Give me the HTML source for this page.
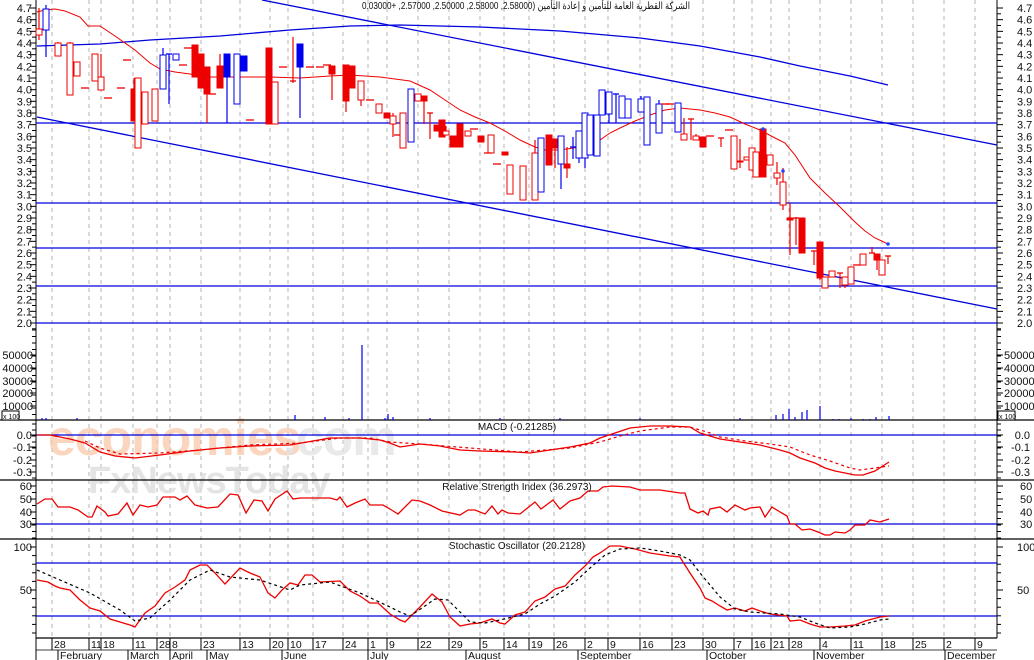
<!DOCTYPE html>
<html><head><meta charset="utf-8">
<style>
html,body{margin:0;padding:0;background:#fff;width:1034px;height:660px;overflow:hidden}
svg{display:block}
text{font-family:"Liberation Sans","Noto Sans CJK SC",sans-serif;font-size:10.5px;fill:#111}
</style></head>
<body>
<svg id="s" width="1034" height="660" viewBox="0 0 1034 660" xmlns="http://www.w3.org/2000/svg">
<rect width="1034" height="660" fill="#fff"/>
<g id="grid"></g>
<text x="48" y="455" style="font-size:50px;fill:#f8c5a5;opacity:.7;font-weight:bold;letter-spacing:-1px">economies</text>
<text x="283" y="455" style="font-size:50px;fill:#e2e2e2;opacity:.75;font-weight:bold;letter-spacing:-1px">.com</text>
<text x="88" y="493" style="font-size:38px;fill:#dcdcdc;opacity:.75;font-weight:bold;letter-spacing:-1px">FxNewsToday</text>
<g id="main"></g>
<text x="362" y="9" textLength="328" lengthAdjust="spacingAndGlyphs" style="font-size:10px">0.03000+ ,2.57000 ,2.50000 ,2.58000 ,2.58000) الشركة القطرية العامة للتأمين و إعادة التأمين</text>
<text x="517" y="430" text-anchor="middle" style="font-size:10px">MACD (-0.21285)</text>
<text x="517" y="490" text-anchor="middle" style="font-size:10px">Relative Strength Index (36.2973)</text>
<text x="517" y="549" text-anchor="middle" style="font-size:10px">Stochastic Oscillator (20.2128)</text>
<rect x="2" y="411" width="17" height="9" fill="#fff" stroke="#000" stroke-width="1"/>
<text x="3" y="419" style="font-size:7px">x 100</text>
<rect x="998" y="411" width="17" height="9" fill="#fff" stroke="#000" stroke-width="1"/>
<text x="999" y="419" style="font-size:7px">x 100</text>
</svg>
<script>
const NS="http://www.w3.org/2000/svg";
const S=document.getElementById('s'),G=document.getElementById('grid'),M=document.getElementById('main');
function el(p,t,a,txt){const e=document.createElementNS(NS,t);for(const k in a)e.setAttribute(k,a[k]);if(txt!==undefined)e.textContent=txt;p.appendChild(e);return e;}
function line(p,x1,y1,x2,y2,c,w,d){const a={x1,y1,x2,y2,stroke:c,'stroke-width':w||1};if(d)a['stroke-dasharray']=d;return el(p,'line',a);}
function poly(p,pts,c,w,d){const a={points:pts.map(q=>q.join(',')).join(' '),fill:'none',stroke:c,'stroke-width':w||1};if(d)a['stroke-dasharray']=d;return el(p,'polyline',a);}
function txt(p,x,y,s,anc,sz){const a={x,y};if(anc)a['text-anchor']=anc;if(sz)a.style='font-size:'+sz+'px';return el(p,'text',a,s);}
const gx=[52,89,101,133,157,170,201,240,270,288,313,343,368,387,418,449,480,504,529,554,585,608,640,672,703,734,752,771,789,820,851,882,913,944,975];
gx.forEach(x=>line(G,x,0,x,638,'#b5b5b5',1,'4,4'));
line(M,36,0,36,638,'#000',1);line(M,997,0,997,638,'#000',1);
line(M,0,420,1034,420,'#000',1.3);line(M,0,480,1034,480,'#000',1.3);line(M,0,539,1034,539,'#000',1.3);line(M,36,638,997,638,'#000',1.3);
line(M,36,638,36,660,'#000',1);
const py=p=>8+(4.7-p)*116.67;
for(let i=0;i<=27;i++){const p=4.7-i*0.1,y=py(p),s=p.toFixed(1);
 txt(M,32,y+4,s,'end',11);txt(M,1017,y+4,s,null,11);
 line(M,30,y,36,y,'#000',1);line(M,997,y,1003,y,'#000',1);
 line(M,32,y+5.8,36,y+5.8,'#000',1);line(M,997,y+5.8,1001,y+5.8,'#000',1);}
for(let y=330;y<420;y+=6.5){line(M,32,y,36,y,'#000',1);line(M,997,y,1001,y,'#000',1);}
[[50000,355],[40000,368],[30000,381],[20000,393],[10000,406]].forEach(([v,y])=>{txt(M,33,y+4,v,'end',11);txt(M,1004,y+4,v,null,11);line(M,30,y,36,y,'#000',1);line(M,997,y,1003,y,'#000',1);});
[['0.0',435],['-0.1',447],['-0.2',460],['-0.3',472]].forEach(([v,y])=>{txt(M,32,y+4,v,'end',11);txt(M,1030,y+4,v,'end',11);line(M,30,y,36,y,'#000',1);line(M,997,y,1003,y,'#000',1);});
for(let y=424;y<480;y+=6){line(M,32,y,36,y,'#000',1);line(M,997,y,1001,y,'#000',1);}
[['60',486],['50',499],['40',512],['30',524]].forEach(([v,y])=>{txt(M,32,y+4,v,'end',11);txt(M,1020,y+4,v,null,11);line(M,30,y,36,y,'#000',1);line(M,997,y,1003,y,'#000',1);});
for(let y=486;y<539;y+=6.5){line(M,32,y,36,y,'#000',1);line(M,997,y,1001,y,'#000',1);}
[['100',547],['50',590]].forEach(([v,y])=>{txt(M,32,y+4,v,'end',11);txt(M,1017,y+4,v,null,11);line(M,30,y,36,y,'#000',1);line(M,997,y,1003,y,'#000',1);});
for(let y=547;y<638;y+=8.6){line(M,32,y,36,y,'#000',1);line(M,997,y,1001,y,'#000',1);}
[123,203,248,286].forEach(y=>line(M,36,y,997,y,'#0000dd',1.3));
line(M,36,323,997,323,'#0000dd',1.3);
line(M,36,435,997,435,'#0000dd',1.3);line(M,36,524,997,524,'#0000dd',1.3);
line(M,36,563,997,563,'#0000dd',1.3);line(M,36,616,997,616,'#0000dd',1.3);
line(M,262,0,997,145,'#0000dd',1.3);
line(M,37,117,997,309,'#0000dd',1.3);
poly(M,[[37,46],[100,44],[150,40],[220,36],[290,30],[350,26],[400,25],[480,27],[560,31],[640,38],[700,46],[760,57],[800,66],[850,76],[888,85]],'#0000dd',1.3);
poly(M,[[37,12],[45,10],[55,9],[65,11],[80,17],[88,26],[100,26],[115,36],[135,50],[150,63],[160,69],[175,72],[190,74],[210,77],[240,77],[270,77],[300,78],[330,76],[350,75],[380,77],[410,81],[430,90],[445,100],[460,110],[475,117],[490,123],[505,131],[520,140],[535,147],[545,150],[560,150],[580,147],[600,140],[610,133],[620,128],[635,121],[650,115],[665,110],[680,108],[700,110],[715,113],[730,117],[745,124],[760,130],[775,138],[785,143],[795,155],[810,178],[825,193],[840,207],[855,222],[865,231],[875,238],[888,244]],'#ee0000',1);
const C=[[39,29,35,8,40,'r',0],[46,9,30,5,57,'b',0],[58,43,56,42,56,'r',0],[70,43,95,42,95,'r',0],[77,62,76,62,76,'r',0],[85,88,88],[95,54,81,54,81,'r',0],[101,77,90,54,90,'r',0],[108,98,98],[121,88,88],[127,60,60],[134,89,121,78,121,'r',1],[138,78,148,78,148,'r',0],[145,92,124,92,124,'r',0],[155,89,121,89,121,'r',0],[163,55,89,48,89,'b',0],[169,54,54,54,104,'b',0],[176,54,60,54,60,'b',0],[183,65,65],[188,48,48],[195,45,77,45,77,'r',1],[201,54,88,54,88,'r',1],[207,67,94,67,123,'r',1],[212,94,94],[220,66,88,54,88,'r',1],[227,54,77,54,123,'b',1],[237,54,104,54,104,'b',0],[244,56,71,56,71,'b',1],[250,120,120],[269,48,124,48,124,'r',1],[275,82,124,82,124,'r',0],[283,67,67],[293,81,81,37,83,'r',0],[300,44,67,44,118,'b',1],[310,67,67],[320,67,67],[327,65,65],[332,66,74,66,100,'r',1],[346,65,101,65,112,'r',1],[352,66,88,66,88,'r',1],[361,81,100,81,106,'r',0],[370,100,100],[379,104,113,104,113,'r',0],[387,113,118,113,118,'r',1],[393,116,124,113,137,'r',0],[398,135,135],[403,113,148,113,148,'r',0],[411,89,142,89,142,'b',0],[418,94,101,94,101,'r',0],[424,96,101,96,124,'r',1],[430,113,113,113,139,'r',0],[437,125,131,125,131,'r',1],[442,120,137,120,137,'r',1],[446,131,135,126,135,'r',0],[453,136,147,136,147,'r',1],[460,124,147,124,147,'r',1],[468,131,136,131,136,'r',0],[474,129,129],[481,136,142,136,142,'r',1],[491,135,153,135,153,'r',0],[488,153,153],[497,164,164],[505,152,155,152,155,'r',1],[510,165,194,165,194,'r',0],[523,166,200,166,200,'r',0],[535,153,200,140,200,'r',0],[541,138,192,138,192,'b',0],[549,135,165,135,165,'r',1],[555,139,148,139,168,'r',1],[561,136,164,136,189,'b',0],[567,164,168,147,178,'r',1],[573,147,147,137,159,'b',0],[579,131,158,131,163,'b',0],[585,113,158,113,168,'b',0],[590,115,155,115,155,'b',0],[597,115,156,115,156,'b',0],[602,90,115,90,115,'b',0],[609,92,114,92,123,'b',0],[616,94,94,94,123,'b',0],[622,96,118,96,118,'b',0],[628,99,118,99,118,'b',0],[641,99,112,96,112,'b',0],[647,97,145,97,145,'b',0],[659,104,133,100,133,'b',0],[665,104,104],[670,104,104],[678,103,132,103,132,'b',0],[684,134,140,118,140,'r',0],[691,119,119,119,140,'r',0],[696,136,140,134,140,'r',0],[703,137,147,137,147,'r',1],[710,136,136],[721,138,138,138,147,'r',0],[729,130,130],[734,136,169,136,169,'r',0],[740,161,162,139,168,'r',0],[747,157,160,157,160,'r',0],[752,148,170,148,170,'r',0],[756,152,177,152,177,'r',0],[763,129,177,129,177,'r',1],[770,155,165,155,165,'r',0],[777,173,178,162,185,'r',0],[783,182,205,168,210,'r',0],[790,218,220,203,255,'r',1],[796,218,218,217,245,'r',0],[802,218,253,218,253,'r',1],[814,251,251,251,265,'r',0],[820,242,278,242,280,'r',1],[825,277,288,277,288,'r',0],[832,271,277,271,277,'r',0],[840,273,273,273,288,'r',0],[845,277,285,277,288,'r',0],[851,267,284,267,284,'r',0],[857,265,265],[863,254,265,254,265,'r',0],[872,253,253,247,253,'r',0],[877,254,260,254,270,'r',1],[882,260,275,260,275,'r',0],[888,256,256,256,264,'r',0]];
C.forEach(c=>{let [x,t,b,wt,wb,col,f]=c;const k=col==='b'?'#0000ee':'#ee0000';
 if(wt===undefined){line(M,x-4,t,x+4,t,'#ee0000',1.3);return;}
 line(M,x,wt,x,wb,k,1.2);
 if(b-t<1){line(M,x-3,t,x+3,t,k,1.3);}
 else el(M,'rect',{x:x-3,y:t,width:6,height:b-t,fill:f?k:'#fff',stroke:k,'stroke-width':1});});
[[763,129],[783,171],[888,244]].forEach(([x,y])=>el(M,'circle',{cx:x,cy:y,r:1.8,fill:'#2244ff'}));
[[42,418],[46,418],[77,418],[295,415],[325,417],[349,418],[362,345],[385,418],[388,414],[393,417],[430,418],[500,418],[560,418],[640,418],[740,418],[776,415],[783,414],[789,409],[795,417],[802,412],[807,410],[820,406],[833,419],[839,419],[851,418],[863,419],[870,419],[876,417],[889,416]].forEach(([x,y])=>line(M,x,y,x,420,'#0000ee',1.2));
poly(M,[[37,435],[50,435],[70,439],[85,443],[100,452],[115,456],[135,458],[160,455],[190,451],[220,448],[250,446],[290,445],[330,438],[360,438],[380,440],[390,443],[400,447],[420,444],[440,446],[460,450],[480,451],[515,452],[530,453],[550,450],[570,447],[590,443],[600,438],[615,433],[630,428],[650,426],[670,426],[690,427],[700,433],[720,439],[740,442],[760,445],[780,450],[790,453],[800,458],[815,463],[825,468],[835,471],[845,473],[855,475],[863,475],[875,471],[889,462]],'#ee0000',1.3);
poly(M,[[85,441],[100,448],[120,454],[160,453],[200,450],[250,445],[300,443],[340,438],[370,438],[390,442],[420,444],[470,448],[520,452],[570,448],[600,442],[620,436],[640,431],[670,427],[690,427],[710,433],[720,437],[745,441],[770,444],[790,447],[810,455],[830,461],[850,468],[860,470],[875,468],[889,466]],'#ee0000',1.2,'3,3');
poly(M,[[37,504],[45,499],[52,499],[58,507],[70,507],[78,510],[88,517],[92,517],[97,506],[105,512],[108,516],[118,514],[127,503],[133,515],[140,505],[148,507],[157,505],[163,497],[175,497],[180,500],[187,496],[195,505],[207,508],[218,507],[230,494],[238,495],[246,513],[254,500],[262,501],[268,511],[275,499],[287,491],[293,499],[300,498],[330,498],[337,500],[340,497],[347,507],[355,503],[365,499],[370,505],[383,505],[390,509],[398,514],[412,500],[420,501],[430,505],[442,511],[460,515],[468,510],[475,510],[485,514],[492,506],[498,514],[502,510],[508,513],[520,514],[535,502],[541,509],[553,500],[560,509],[570,501],[580,498],[588,491],[598,491],[603,487],[612,486],[630,487],[640,490],[660,490],[680,493],[685,493],[690,509],[698,513],[703,511],[708,515],[710,509],[720,507],[727,512],[735,505],[745,510],[750,508],[760,507],[765,517],[772,507],[780,512],[787,516],[790,524],[795,524],[802,530],[810,529],[818,532],[825,535],[830,535],[835,532],[845,533],[850,530],[855,525],[865,525],[870,520],[880,522],[889,519]],'#ee0000',1.3);
poly(M,[[37,580],[48,582],[55,586],[60,588],[70,590],[80,600],[90,608],[100,611],[110,619],[120,622],[130,625],[135,627],[145,613],[155,606],[165,593],[175,587],[185,580],[190,570],[200,565],[207,565],[215,573],[225,584],[240,568],[250,573],[260,577],[268,593],[275,598],[282,590],[290,583],[298,585],[305,575],[312,575],[320,582],[340,581],[350,591],[360,596],[370,603],[378,603],[390,614],[400,620],[405,622],[412,615],[420,607],[432,594],[442,602],[450,617],[460,626],[470,624],[480,623],[492,619],[500,623],[505,624],[515,615],[525,612],[535,601],[545,597],[555,589],[565,586],[575,575],[585,566],[593,557],[600,553],[610,546],[620,546],[635,549],[650,553],[670,556],[680,557],[683,562],[690,573],[700,588],[705,598],[712,601],[720,606],[727,610],[735,608],[745,611],[752,608],[760,611],[770,614],[787,616],[790,621],[800,620],[810,624],[820,627],[830,627],[845,626],[855,625],[865,621],[880,617],[889,616]],'#ee0000',1.3);
poly(M,[[37,570],[60,580],[90,593],[120,610],[135,621],[150,618],[170,600],[190,580],[210,570],[230,577],[260,580],[290,590],[300,585],[330,582],[360,593],[390,607],[400,612],[410,616],[422,608],[435,599],[448,600],[458,610],[470,622],[485,623],[500,620],[525,614],[540,604],[555,596],[575,582],[590,568],[605,555],[620,549],[640,548],[660,551],[680,555],[690,560],[700,573],[710,585],[720,597],[735,609],[750,612],[765,613],[780,614],[800,617],[815,623],[830,628],[850,627],[865,624],[880,620],[889,619]],'#000',1.2,'3,3');
const D=[[52,'28'],[89,'11'],[101,'18'],[133,'11'],[157,'28'],[170,'8'],[201,'23'],[240,'13'],[270,'20'],[288,'10'],[313,'17'],[343,'24'],[368,'1'],[387,'9'],[418,'22'],[449,'29'],[480,'5'],[504,'14'],[529,'19'],[554,'26'],[585,'2'],[608,'9'],[640,'16'],[672,'23'],[703,'30'],[734,'7'],[752,'16'],[771,'21'],[789,'28'],[820,'4'],[851,'11'],[882,'18'],[913,'25'],[944,'2'],[975,'9']];
D.forEach(([x,s])=>{line(M,x,638,x,650,'#000',1);txt(M,x+2,648,s,null,10.5);});
[[58,'February'],[128,'March'],[170,'April'],[207,'May'],[282,'June'],[368,'July'],[466,'August'],[578,'September'],[707,'October'],[814,'November'],[945,'December']].forEach(([x,s])=>{line(M,x,650,x,660,'#000',1);txt(M,x+2,659,s,null,10.5);});
line(M,36,650,997,650,'#000',0.8);
</script>
</body></html>
